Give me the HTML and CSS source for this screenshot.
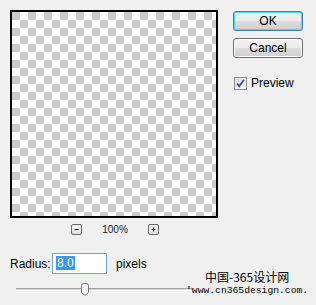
FILE: index.html
```html
<!DOCTYPE html>
<html>
<head>
<meta charset="utf-8">
<link rel="stylesheet" href="styles.css">
</head>
<body>
<div class="dialog">
  <div class="left">
    <div class="preview"></div>
    <div class="zoom-row">
      <span class="zbtn">
        <svg width="9" height="9" viewBox="0 0 9 9"><path d="M2.5 4.5h4" stroke="#222" stroke-width="1"/></svg>
      </span>
      <span class="zoom-val">100%</span>
      <span class="zbtn">
        <svg width="9" height="9" viewBox="0 0 9 9"><path d="M2.5 4.5h4M4.5 2.5v4" stroke="#222" stroke-width="1"/></svg>
      </span>
    </div>
    <div class="radius-row">
      <span class="label">Radius:</span>
      <span class="input"><span class="sel">8.0</span></span>
      <span class="unit">pixels</span>
    </div>
    <div class="slider">
      <div class="track"></div>
      <div class="thumb">
        <svg width="8" height="13" viewBox="0 0 8 13"><path d="M0.5 2.5Q0.5 0.5 2.5 0.5H5.5Q7.5 0.5 7.5 2.5V9.5L4 12.5L0.5 9.5Z" fill="#f4f4f4" stroke="#777"/></svg>
      </div>
    </div>
  </div>
  <div class="right">
    <button class="btn btn-default">OK</button>
    <button class="btn">Cancel</button>
    <label class="check">
      <span class="box">
        <svg width="11" height="11" viewBox="0 0 11 11"><path d="M2 5.5L4.3 8.3L9 1.8" fill="none" stroke="#2a4fa6" stroke-width="1.8"/></svg>
      </span>
      <span>Preview</span>
    </label>
  </div>
</div>
<div class="watermark">
  <div class="wm-cn">中国-365设计网</div>
  <div class="wm-url">'www.cn365design.com.</div>
</div>
</body>
</html>
```

FILE: styles.css
```css
html, body {
  margin: 0;
  padding: 0;
}
body {
  width: 316px;
  height: 305px;
  background: #f0f0f0;
  font-family: "Liberation Sans", Arial, sans-serif;
  font-size: 12px;
  color: #000;
  position: relative;
  overflow: hidden;
}
.dialog {
  display: flex;
  padding: 10px 0 0 10px;
}
.left {
  width: 208px;
  display: flex;
  flex-direction: column;
}
.preview {
  width: 204px;
  height: 204px;
  border: 2px solid #000;
  background-color: #fff;
  background-image: conic-gradient(#fff 0 25%, #cccccc 0 50%, #fff 0 75%, #cccccc 0);
  background-size: 16px 16px;
}
.zoom-row {
  margin-top: 6px;
  height: 10px;
  display: flex;
  align-items: center;
  justify-content: center;
  gap: 19px;
  padding-left: 2px;
}
.zbtn {
  width: 9px;
  height: 9px;
  border: 1px solid #6a6a6a;
  border-radius: 2px;
  background: linear-gradient(#fafafa, #dedede);
  display: flex;
}
.zoom-val {
  font-size: 10px;
  width: 28px;
  text-align: center;
  color: #222;
}
.radius-row {
  margin-top: 19px;
  display: flex;
  align-items: center;
  height: 21px;
}
.label {
  width: 42px;
}
.input {
  box-sizing: border-box;
  width: 55px;
  height: 21px;
  background: #fff;
  border: 1px solid #7aa0cc;
  padding: 2px 0 0 3px;
  display: flex;
  align-items: flex-start;
}
.sel {
  background: #3399ff;
  color: #fff;
  height: 14px;
  line-height: 14px;
  padding: 0 1px;
}
.unit {
  margin-left: 9px;
}
.slider {
  position: relative;
  margin-top: 9px;
  margin-left: 6px;
  height: 14px;
}
.track {
  position: absolute;
  left: 0;
  top: 5px;
  width: 178px;
  height: 1px;
  background: #d8d8d8;
  border-top: 1px solid #a0a0a0;
  border-bottom: 1px solid #fff;
}
.thumb {
  position: absolute;
  left: 65px;
  top: 0;
  display: flex;
}
.right {
  margin-left: 15px;
  padding-top: 1px;
  display: flex;
  flex-direction: column;
  width: 70px;
}
.btn {
  box-sizing: border-box;
  width: 70px;
  height: 20px;
  font-family: "Liberation Sans", Arial, sans-serif;
  font-size: 12px;
  color: #000;
  border: 1px solid #707070;
  border-radius: 3px;
  background: linear-gradient(#f2f2f2 0%, #ebebeb 48%, #dddddd 52%, #cfcfcf 100%);
  padding: 0;
  margin: 0 0 7px 0;
  box-shadow: inset 0 0 0 1px #fcfcfc;
}
.btn-default {
  border-color: #3c7fb1;
  box-shadow: inset 0 0 0 1px #48d8fb;
}
.check {
  margin-top: 11px;
  display: flex;
  align-items: center;
  gap: 4px;
  margin-left: 1px;
}
.box {
  box-sizing: border-box;
  width: 13px;
  height: 13px;
  border: 1px solid #8e8f8f;
  background: linear-gradient(135deg, #dcdcdc, #fdfdfd);
  display: flex;
  align-items: center;
  justify-content: center;
}
.watermark {
  position: absolute;
  left: 186px;
  top: 270px;
  display: flex;
  flex-direction: column;
  align-items: flex-start;
}
.wm-cn {
  margin-left: 19px;
  font-family: "Noto Sans CJK SC", sans-serif;
  font-size: 12px;
  line-height: 14px;
}
.wm-url {
  margin-top: 2px;
  font-family: "Liberation Mono", monospace;
  font-size: 9.7px;
  line-height: 10px;
}
```
